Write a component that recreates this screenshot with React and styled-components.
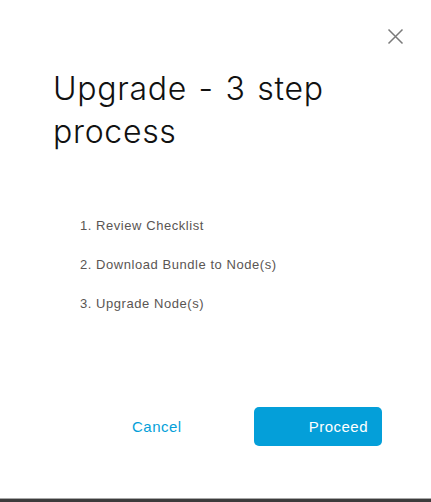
import React from "react";
import styled, { createGlobalStyle } from "styled-components";

const Global = createGlobalStyle`
  html, body { margin: 0; padding: 0; background: #fff; }
  #root { width: 431px; height: 502px; }
`;

const Page = styled.div`
  width: 431px;
  height: 502px;
  display: flex;
  flex-direction: column;
  background: #fff;
  overflow: hidden;
`;

const Dialog = styled.div`
  flex: 1;
  display: flex;
  flex-direction: column;
  position: relative;
  padding: 0 0 0 53px;
`;

const Close = styled.button`
  position: absolute;
  top: 28px;
  right: 27px;
  width: 17px;
  height: 17px;
  padding: 0;
  border: none;
  background: none;
  display: flex;
  align-items: center;
  justify-content: center;
`;

const Title = styled.h1`
  margin: 67px 0 0;
  font-family: Inter, "Liberation Sans", sans-serif;
  font-weight: 300;
  font-size: 32px;
  line-height: 43px;
  color: #111;
  letter-spacing: 0.7px;
  word-spacing: 2px;
  width: 300px;
`;

const Steps = styled.ol`
  margin: 65px 0 0;
  padding: 0 0 0 27px;
  list-style: none;
  display: flex;
  flex-direction: column;
  gap: 24px;
`;

const Step = styled.li`
  font-family: "Liberation Sans", Arial, sans-serif;
  font-size: 13px;
  line-height: 15px;
  letter-spacing: 0.55px;
  color: #5a5553;
`;

const Footer = styled.div`
  margin-top: auto;
  margin-bottom: 52px;
  display: flex;
  align-items: center;
  padding-left: 79px;
`;

const CancelBtn = styled.button`
  border: none;
  background: none;
  padding: 0;
  font-family: "Liberation Sans", Arial, sans-serif;
  font-size: 15px;
  letter-spacing: 0.5px;
  color: #049fd9;
  width: 122px;
  text-align: left;
`;

const ProceedBtn = styled.button`
  width: 128px;
  height: 39px;
  border: none;
  border-radius: 5px;
  background: #049fd9;
  color: #fff;
  font-family: "Liberation Sans", Arial, sans-serif;
  font-size: 15px;
  letter-spacing: 0.5px;
  text-align: right;
  padding: 0 14px 0 0;
`;

const Taskbar = styled.div`
  height: 3px;
  border-top: 1px solid #a8a8a8;
  background: #3c3c3c;
`;

export default function App() {
  return (
    <Page>
      <Global />
      <Dialog>
        <Close aria-label="Close">
          <svg width="17" height="17" viewBox="0 0 17 17">
            <path d="M1.5 1.5 L15.5 15.5 M15.5 1.5 L1.5 15.5" stroke="#7a7a7a" strokeWidth="1.5" fill="none" />
          </svg>
        </Close>
        <Title>Upgrade - 3 step process</Title>
        <Steps>
          <Step>1. Review Checklist</Step>
          <Step>2. Download Bundle to Node(s)</Step>
          <Step>3. Upgrade Node(s)</Step>
        </Steps>
        <Footer>
          <CancelBtn>Cancel</CancelBtn>
          <ProceedBtn>Proceed</ProceedBtn>
        </Footer>
      </Dialog>
      <Taskbar />
    </Page>
  );
}
